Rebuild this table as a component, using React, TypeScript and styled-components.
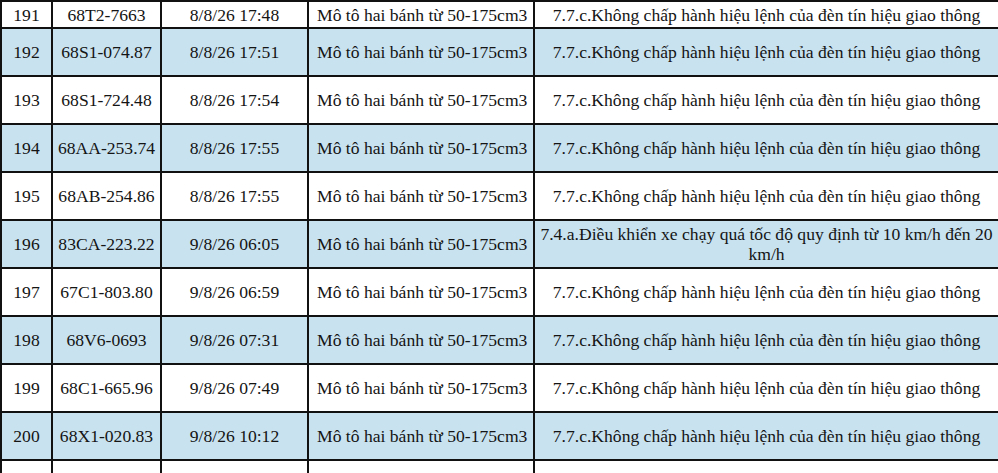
import React from "react";
import styled, { createGlobalStyle } from "styled-components";

const Global = createGlobalStyle`
  html, body { margin: 0; padding: 0; background: #ffffff; overflow: hidden; }
  body { font-family: "Liberation Serif", "Times New Roman", serif; }
`;

const Table = styled.table`
  border-collapse: collapse;
  table-layout: fixed;
  width: 998px;
  font-family: "Liberation Serif", "Times New Roman", serif;
  font-size: 17.6px;
  color: #141414;
`;

const Row = styled.tr<{ $shade: boolean; $h: number }>`
  height: ${(p) => p.$h}px;
  background: ${(p) => (p.$shade ? "#c8e2f0" : "#ffffff")};
`;

const Cell = styled.td<{ $align?: "left" | "center"; $wrap?: boolean }>`
  border: 2px solid #111;
  padding: 0 ${(p) => (p.$align === "left" ? "8px" : "2px")};
  text-align: ${(p) => p.$align ?? "center"};
  vertical-align: middle;
  line-height: 20px;
  white-space: ${(p) => (p.$wrap ? "normal" : "nowrap")};
  overflow: hidden;
`;

type Entry = { no: string; plate: string; time: string; type: string; violation: string };

const V77 = "7.7.c.Không chấp hành hiệu lệnh của đèn tín hiệu giao thông";
const MOTO = "Mô tô hai bánh từ 50-175cm3";

const rows: Entry[] = [
  { no: "191", plate: "68T2-7663", time: "8/8/26 17:48", type: MOTO, violation: V77 },
  { no: "192", plate: "68S1-074.87", time: "8/8/26 17:51", type: MOTO, violation: V77 },
  { no: "193", plate: "68S1-724.48", time: "8/8/26 17:54", type: MOTO, violation: V77 },
  { no: "194", plate: "68AA-253.74", time: "8/8/26 17:55", type: MOTO, violation: V77 },
  { no: "195", plate: "68AB-254.86", time: "8/8/26 17:55", type: MOTO, violation: V77 },
  {
    no: "196",
    plate: "83CA-223.22",
    time: "9/8/26 06:05",
    type: MOTO,
    violation: "7.4.a.Điều khiển xe chạy quá tốc độ quy định từ 10 km/h đến 20 km/h",
  },
  { no: "197", plate: "67C1-803.80", time: "9/8/26 06:59", type: MOTO, violation: V77 },
  { no: "198", plate: "68V6-0693", time: "9/8/26 07:31", type: MOTO, violation: V77 },
  { no: "199", plate: "68C1-665.96", time: "9/8/26 07:49", type: MOTO, violation: V77 },
  { no: "200", plate: "68X1-020.83", time: "9/8/26 10:12", type: MOTO, violation: V77 },
];

export default function App() {
  return (
    <>
      <Global />
      <Table>
        <colgroup>
          <col style={{ width: 51 }} />
          <col style={{ width: 109 }} />
          <col style={{ width: 147 }} />
          <col style={{ width: 226 }} />
          <col style={{ width: 465 }} />
        </colgroup>
        <tbody>
          {rows.map((r, i) => (
            <Row key={r.no} $shade={i % 2 === 1} $h={i === 0 ? 27 : 48}>
              <Cell>{r.no}</Cell>
              <Cell>{r.plate}</Cell>
              <Cell>{r.time}</Cell>
              <Cell $align="left">{r.type}</Cell>
              <Cell $wrap>{r.violation}</Cell>
            </Row>
          ))}
          <Row $shade={false} $h={48}>
            <Cell />
            <Cell />
            <Cell />
            <Cell $align="left" />
            <Cell $wrap />
          </Row>
        </tbody>
      </Table>
    </>
  );
}
